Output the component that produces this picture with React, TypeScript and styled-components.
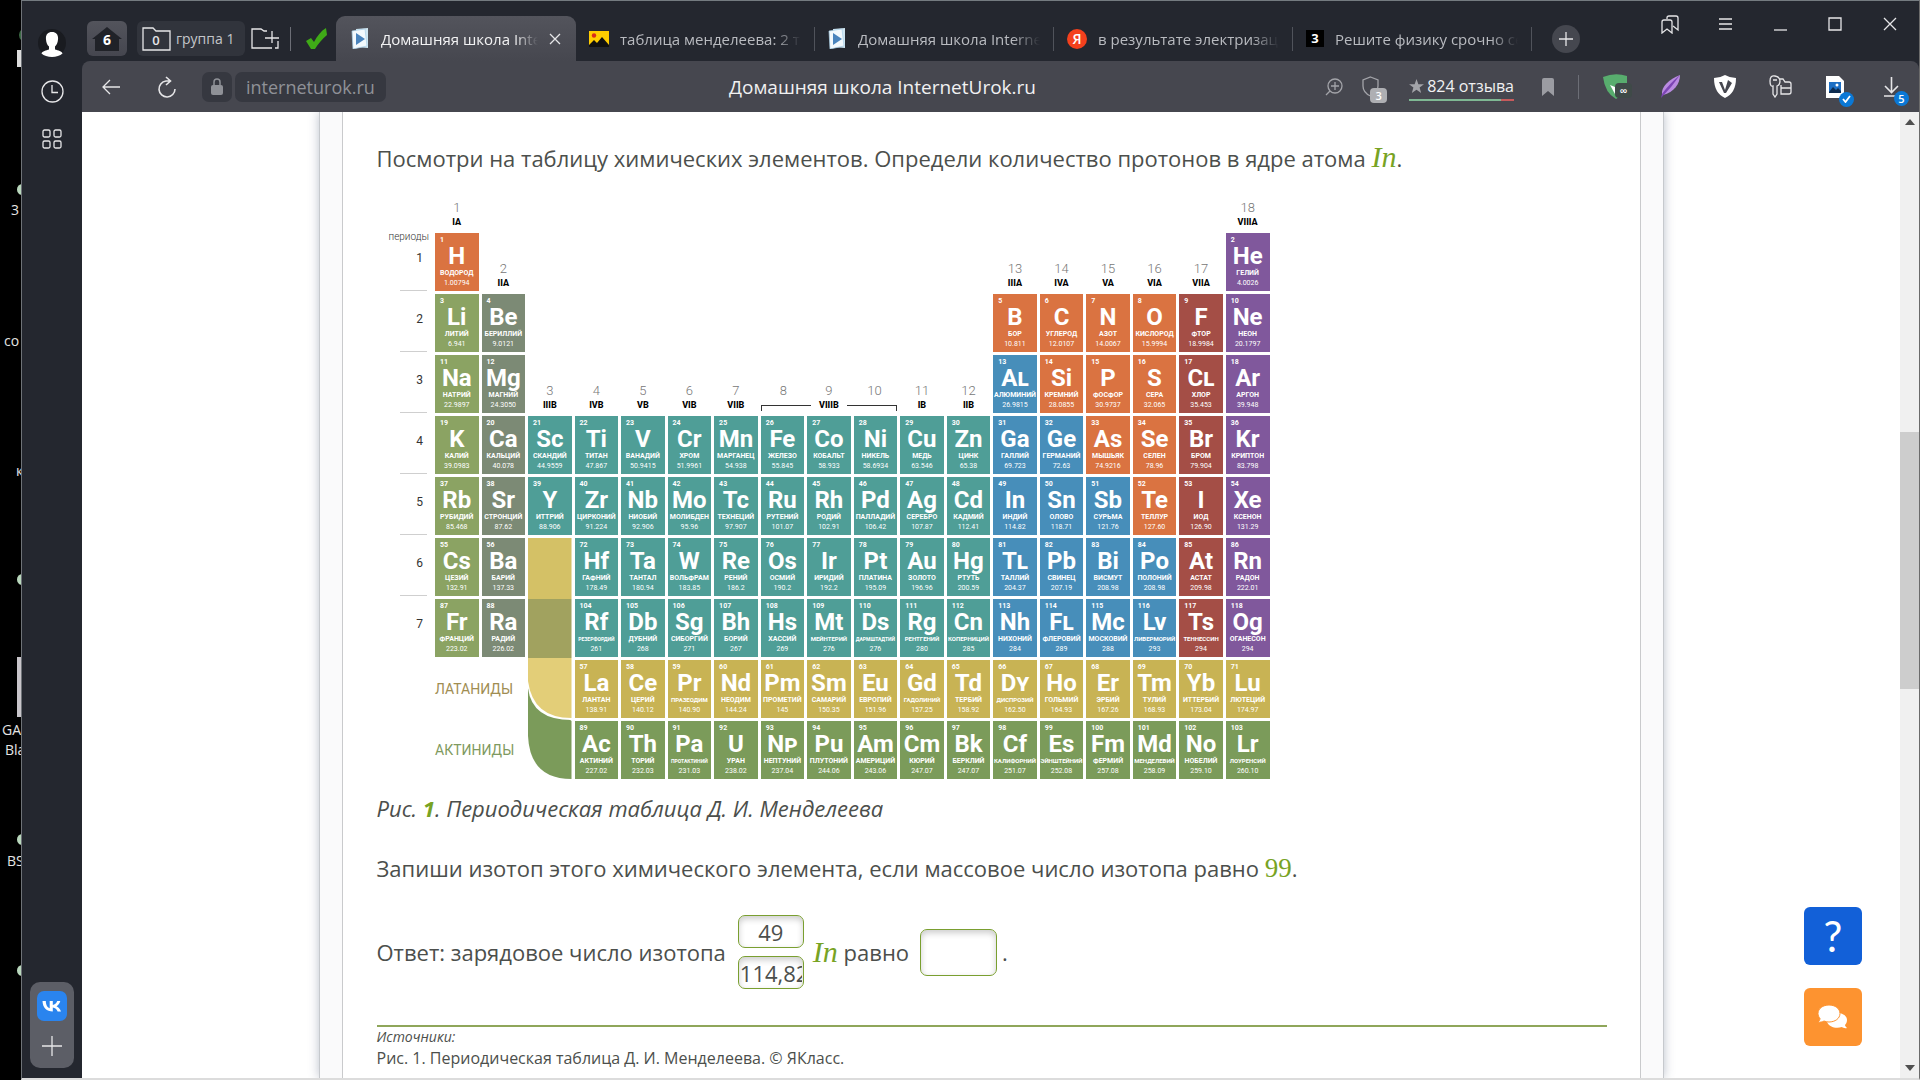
import React from "react";
import styled, { createGlobalStyle, css } from "styled-components";

const GlobalStyle = createGlobalStyle`
  * { box-sizing: border-box; }
  body { margin: 0; background: #000; font-family: "Open Sans", "Noto Sans", sans-serif; }
  button, input { font: inherit; color: inherit; }
  button { background: none; border: 0; padding: 0; margin: 0; }
  svg { flex: none; }
  p { margin: 0; }
  a { color: inherit; text-decoration: none; }
`;

/* ---------- window frame ---------- */

const Screen = styled.div`
  display: flex;
  height: 100vh;
  overflow: hidden;
`;

const Desktop = styled.div`
  position: relative;
  flex: 0 0 21px;
  background: #000;
  overflow: hidden;
`;

const DesktopLabel = styled.span<{ $x: number; $y: number }>`
  position: absolute;
  left: ${(p) => p.$x}px;
  top: ${(p) => p.$y}px;
  font-size: 14px;
  line-height: 20px;
  color: #e4e4e4;
  white-space: nowrap;
`;

const DesktopShape = styled.span<{ $y: number; $h: number; $w: number; $color: string; $round?: boolean }>`
  position: absolute;
  left: ${(p) => 21 - p.$w}px;
  top: ${(p) => p.$y}px;
  width: ${(p) => (p.$round ? p.$h : p.$w)}px;
  height: ${(p) => p.$h}px;
  background: ${(p) => p.$color};
  border-radius: ${(p) => (p.$round ? "50%" : "0")};
`;

const Window = styled.div`
  flex: 1;
  min-width: 0;
  display: flex;
  background: #24272f;
  border-top: 1px solid #747b80;
  border-left: 1px solid #6f7378;
  border-right: 1px solid #6b6b6b;
  border-bottom: 2px solid #dcdcdc;
`;

const SideBar = styled.nav`
  flex: 0 0 60px;
  display: flex;
  flex-direction: column;
  align-items: center;
  justify-content: space-between;
  padding: 28px 0 10px;
`;

const SideGroup = styled.div`
  display: flex;
  flex-direction: column;
  align-items: center;
  gap: 20px;
`;

const SideButton = styled.button`
  display: flex;
  align-items: center;
  justify-content: center;
  width: 30px;
  height: 28px;
`;

const MessengerBox = styled.div`
  display: flex;
  flex-direction: column;
  align-items: center;
  justify-content: space-between;
  width: 44px;
  height: 86px;
  padding: 10px 0 8px;
  border-radius: 10px;
  background: #5c5e66;
`;

const Column = styled.div`
  flex: 1;
  min-width: 0;
  display: flex;
  flex-direction: column;
`;

/* ---------- tab strip ---------- */

const TabStrip = styled.div`
  flex: 0 0 60px;
  display: flex;
  align-items: flex-start;
  justify-content: space-between;
  padding: 0 17px 0 5px;
`;

const TabsLeft = styled.div`
  display: flex;
  align-items: center;
  height: 60px;
  padding-top: 15px;
`;

const HomeButton = styled.button`
  display: flex;
  align-items: center;
  justify-content: center;
  width: 40px;
  height: 35px;
  border-radius: 6px;
  background: linear-gradient(#53545c, #45464f);
`;

const GroupButton = styled.button`
  display: flex;
  align-items: center;
  gap: 5px;
  width: 108px;
  height: 35px;
  margin: 0 6px 0 10px;
  padding-left: 5px;
  border-radius: 6px;
  background: #31343c;
  color: #c4c6ca;
  font-size: 14px;
  white-space: nowrap;
`;

const PlainButton = styled.button<{ $w: number }>`
  display: flex;
  align-items: center;
  justify-content: center;
  width: ${(p) => p.$w}px;
  height: 35px;
`;

const Divider = styled.span<{ $light?: boolean }>`
  flex: none;
  width: 1px;
  height: 24px;
  background: ${(p) => (p.$light ? "#6c6e76" : "#50535b")};
`;

const Check = styled.span`
  display: flex;
  margin: 0 9px 0 15px;
`;

const GroupDivider = styled(Divider)`
  margin-left: 11px;
`;

const Tab = styled.button<{ $active?: boolean }>`
  display: flex;
  align-items: center;
  gap: 11px;
  width: 238px;
  height: 45px;
  padding: 0 13px;
  border-radius: 9px 9px 0 0;
  color: #b9bbc0;
  font-size: 15px;
  line-height: 22px;
  ${(p) =>
    p.$active &&
    css`
      width: 240px;
      padding: 0 15px;
      background: linear-gradient(#53545c, #46474f);
      color: #f2f2f3;
    `}
`;

const TabTitle = styled.span`
  flex: 1;
  min-width: 0;
  text-align: left;
  white-space: nowrap;
  overflow: hidden;
  mask-image: linear-gradient(90deg, #000 85%, transparent 100%);
`;

const NewTab = styled.button`
  display: flex;
  align-items: center;
  justify-content: center;
  width: 28px;
  height: 28px;
  margin-left: 20px;
  border-radius: 50%;
  background: #45474f;
`;

const WindowControls = styled.div`
  display: flex;
  align-items: center;
  gap: 31px;
  padding-top: 11px;
`;

const ControlButton = styled.button`
  display: flex;
  align-items: center;
  justify-content: center;
  width: 24px;
  height: 24px;
`;

/* ---------- toolbar ---------- */

const Toolbar = styled.header`
  flex: 0 0 51px;
  display: flex;
  align-items: center;
  padding: 0 20px 0 18px;
  border-radius: 8px 8px 0 0;
  background: #46474f;
`;

const ToolGroup = styled.div`
  display: flex;
  align-items: center;
`;

const Reload = styled(PlainButton)`
  margin-left: 34px;
`;

const LockBox = styled.button`
  display: flex;
  align-items: center;
  justify-content: center;
  width: 30px;
  height: 30px;
  margin: 0 3px 0 24px;
  border-radius: 7px;
  background: #363840;
`;

const Address = styled.a`
  height: 30px;
  padding: 0 11px;
  border-radius: 7px;
  background: #363840;
  color: #8f9197;
  font-size: 18px;
  line-height: 30px;
`;

const PageTitle = styled.h1`
  flex: 1;
  margin: 0;
  padding-left: 54px;
  color: #f1f1f2;
  font-size: 19px;
  font-weight: 400;
  line-height: 30px;
  text-align: center;
  white-space: nowrap;
`;

const Reviews = styled.button`
  display: flex;
  align-items: center;
  gap: 3px;
  height: 28px;
  margin: 0 28px 0 30px;
  border-bottom: 2px solid;
  border-image: linear-gradient(90deg, #7fb894 87%, #c65a5c 87%) 1;
  color: #f1f1f2;
  font-size: 16px;
  white-space: nowrap;
`;

/* ---------- page ---------- */

const Viewport = styled.div`
  flex: 1;
  min-height: 0;
  display: flex;
  position: relative;
  background: #fff;
`;

const Page = styled.main`
  flex: 1;
  min-width: 0;
  display: flex;
  justify-content: center;
  overflow: hidden;
`;

const Sheet = styled.div`
  flex: 0 1 1345px;
  padding: 0 22px;
  background: #fafafb;
  border: solid #c6c9cd;
  border-width: 0 1px;
  box-shadow: 0 0 10px rgba(60, 75, 105, 0.35);
`;

const Article = styled.article`
  min-height: 100%;
  padding: 29px 33px 0 34px;
  background: #fff;
  border: solid #c9cacc;
  border-width: 0 1px;
  color: #4c4f4c;
  font-size: 22px;
  line-height: 34px;
`;

const Formula = styled.em<{ $upright?: boolean }>`
  font-family: "Liberation Serif", serif;
  font-size: ${(p) => (p.$upright ? 27 : 30)}px;
  line-height: 30px;
  font-style: ${(p) => (p.$upright ? "normal" : "italic")};
  color: #78a324;
`;

const Caption = styled.p`
  margin-top: 9px;
  font-style: italic;
  b { color: #78a324; }
`;

const Task = styled.p`
  margin-top: 26px;
`;

const Answer = styled.div`
  display: flex;
  align-items: center;
  margin-top: 30px;
`;

const Stack = styled.div`
  display: flex;
  flex-direction: column;
  gap: 8px;
  margin: 0 9px 0 12px;
`;

const Box = styled.input<{ $big?: boolean }>`
  display: block;
  width: ${(p) => (p.$big ? 77 : 66)}px;
  height: ${(p) => (p.$big ? 47 : 33)}px;
  margin: ${(p) => (p.$big ? "0 5px 0 11px" : "0")};
  padding: 0 1px;
  border: 1px solid #7a9f30;
  border-radius: 7px;
  background: #fff;
  box-shadow: inset 0 3px 6px rgba(0, 0, 0, 0.2);
  outline: none;
  text-align: center;
`;

const Sources = styled.footer`
  margin-top: 36px;
  border-top: 2px solid #8fa65a;
  font-size: 16px;
  line-height: 22px;
`;

const SourcesTitle = styled.p`
  font-size: 14px;
  font-style: italic;
  line-height: 20px;
`;

const ScrollBar = styled.div`
  flex: 0 0 19px;
  display: flex;
  flex-direction: column;
  align-items: center;
  padding: 7px 0;
  background: #f0f0f0;
`;

const Track = styled.div<{ $share: number }>`
  flex: ${(p) => p.$share} 0 0;
`;

const Thumb = styled.div`
  align-self: stretch;
  flex: 0 0 27%;
  background: #cdcdcd;
`;

const Floating = styled.div`
  position: absolute;
  right: 57px;
  bottom: 32px;
  display: flex;
  flex-direction: column;
  gap: 23px;
`;

const FloatButton = styled.button<{ $color: string }>`
  display: flex;
  align-items: center;
  justify-content: center;
  width: 58px;
  height: 58px;
  border-radius: 6px;
  background: ${(p) => p.$color};
  color: #fff;
  font-family: Lato, "Open Sans", sans-serif;
  font-size: 42px;
  line-height: 58px;
`;

/* ---------- periodic table ---------- */

const Chart = styled.table`
  width: 887px;
  margin: 18px 0 0 9px;
  table-layout: fixed;
  border-collapse: separate;
  border-spacing: 3px;
  font-family: Roboto, sans-serif;
  td, th { padding: 0; height: 58px; vertical-align: top; font-weight: 400; }
  tr:first-child > * { height: 34px; }
`;

const Head = styled.th`
  && { vertical-align: bottom; font-weight: 300; }
  color: #777;
  font-size: 13px;
  line-height: 15px;
  text-align: center;
`;

const Roman = styled.strong`
  display: block;
  color: #000;
  font-size: 9px;
  font-weight: 800;
  line-height: 15px;
`;

const Triple = styled.div`
  display: grid;
  grid-template-columns: repeat(3, 1fr);
`;

const Bracket = styled.div`
  display: grid;
  grid-template-columns: 50px 1fr 50px;
  align-items: start;
`;

const Arm = styled.span<{ $right?: boolean }>`
  height: 6px;
  margin-top: 7px;
  border: solid #333;
  border-width: ${(p) => (p.$right ? "1px 1px 0 0" : "1px 0 0 1px")};
`;

const Period = styled.th<{ $last?: boolean }>`
  color: #333;
  font-size: 12px;
  line-height: 50px;
  text-align: right;
  > span {
    display: block;
    height: 58px;
    margin: 0 5px 0 11px;
    padding-right: 4px;
    border-bottom: ${(p) => (p.$last ? "0" : "1px solid #cfcfcf")};
  }
`;

const PeriodCaption = styled.small`
  display: block;
  height: 0;
  font-size: 10px;
  font-weight: 300;
  line-height: 8px;
  padding-right: 5px;
`;

const Cell = styled.td<{ $bg: string }>`
  background: ${(p) => p.$bg};
  color: #fff;
  text-align: center;
`;

const Num = styled.span`
  display: block;
  height: 12px;
  padding: 2px 0 0 5px;
  font-size: 7px;
  font-weight: 700;
  line-height: 11px;
  text-align: left;
`;

const Sym = styled.b<{ $caps?: boolean }>`
  display: block;
  font-size: 24px;
  line-height: 23px;
  font-variant-caps: ${(p) => (p.$caps ? "small-caps" : "normal")};
`;

const Name = styled.span<{ $len: number }>`
  display: block;
  height: 10px;
  font-size: ${(p) => (p.$len > 10 ? 5 : p.$len > 8 ? 6 : 7)}px;
  font-weight: 700;
  line-height: 10px;
  white-space: nowrap;
`;

const Mass = styled.span`
  display: block;
  font-size: 7px;
  line-height: 11px;
`;

const Series = styled.th<{ $color: string }>`
  color: ${(p) => p.$color};
  font-size: 14px;
  line-height: 58px;
  text-align: left;
`;

const colors: Record<string, string> = {
  o: "#da7341", g: "#8ba363", k: "#7c8a75", t: "#4f9e97", b: "#478eba",
  p: "#80589c", r: "#a44e46", l: "#c8b354", a: "#7b9b5a",
};

type El = [number, string, string, string, string];

/* "number symbol name mass colour", entries divided by semicolons */
const parse = (s: string): El[] =>
  s.split(";").map((e) => {
    const [n, sym, name, mass, c] = e.trim().split(" ");
    return [Number(n), sym, name, mass, c];
  });

const periods = {
  1: [parse("1 H ВОДОРОД 1.00794 o"), parse("2 He ГЕЛИЙ 4.0026 p")],
  2: [
    parse("3 Li ЛИТИЙ 6.941 g;4 Be БЕРИЛЛИЙ 9.0121 k"),
    parse("5 B БОР 10.811 o;6 C УГЛЕРОД 12.0107 o;7 N АЗОТ 14.0067 o;8 O КИСЛОРОД 15.9994 o;9 F ФТОР 18.9984 r;10 Ne НЕОН 20.1797 p"),
  ],
  3: [
    parse("11 Na НАТРИЙ 22.9897 g;12 Mg МАГНИЙ 24.3050 k"),
    parse("13 Al АЛЮМИНИЙ 26.9815 b;14 Si КРЕМНИЙ 28.0855 o;15 P ФОСФОР 30.9737 o;16 S СЕРА 32.065 o;17 Cl ХЛОР 35.453 r;18 Ar АРГОН 39.948 p"),
  ],
  4: [
    parse("19 K КАЛИЙ 39.0983 g;20 Ca КАЛЬЦИЙ 40.078 k;21 Sc СКАНДИЙ 44.9559 t;22 Ti ТИТАН 47.867 t;23 V ВАНАДИЙ 50.9415 t;24 Cr ХРОМ 51.9961 t;25 Mn МАРГАНЕЦ 54.938 t;26 Fe ЖЕЛЕЗО 55.845 t;27 Co КОБАЛЬТ 58.933 t;28 Ni НИКЕЛЬ 58.6934 t;29 Cu МЕДЬ 63.546 t;30 Zn ЦИНК 65.38 t;31 Ga ГАЛЛИЙ 69.723 b;32 Ge ГЕРМАНИЙ 72.63 b;33 As МЫШЬЯК 74.9216 o;34 Se СЕЛЕН 78.96 o;35 Br БРОМ 79.904 r;36 Kr КРИПТОН 83.798 p"),
  ],
  5: [
    parse("37 Rb РУБИДИЙ 85.468 g;38 Sr СТРОНЦИЙ 87.62 k;39 Y ИТТРИЙ 88.906 t;40 Zr ЦИРКОНИЙ 91.224 t;41 Nb НИОБИЙ 92.906 t;42 Mo МОЛИБДЕН 95.96 t;43 Tc ТЕХНЕЦИЙ 97.907 t;44 Ru РУТЕНИЙ 101.07 t;45 Rh РОДИЙ 102.91 t;46 Pd ПАЛЛАДИЙ 106.42 t;47 Ag СЕРЕБРО 107.87 t;48 Cd КАДМИЙ 112.41 t;49 In ИНДИЙ 114.82 b;50 Sn ОЛОВО 118.71 b;51 Sb СУРЬМА 121.76 b;52 Te ТЕЛЛУР 127.60 o;53 I ИОД 126.90 r;54 Xe КСЕНОН 131.29 p"),
  ],
  6: [
    parse("55 Cs ЦЕЗИЙ 132.91 g;56 Ba БАРИЙ 137.33 k"),
    parse("72 Hf ГАФНИЙ 178.49 t;73 Ta ТАНТАЛ 180.94 t;74 W ВОЛЬФРАМ 183.85 t;75 Re РЕНИЙ 186.2 t;76 Os ОСМИЙ 190.2 t;77 Ir ИРИДИЙ 192.2 t;78 Pt ПЛАТИНА 195.09 t;79 Au ЗОЛОТО 196.96 t;80 Hg РТУТЬ 200.59 t;81 Tl ТАЛЛИЙ 204.37 b;82 Pb СВИНЕЦ 207.19 b;83 Bi ВИСМУТ 208.98 b;84 Po ПОЛОНИЙ 208.98 b;85 At АСТАТ 209.98 r;86 Rn РАДОН 222.01 p"),
  ],
  7: [
    parse("87 Fr ФРАНЦИЙ 223.02 g;88 Ra РАДИЙ 226.02 k"),
    parse("104 Rf РЕЗЕРФОРДИЙ 261 t;105 Db ДУБНИЙ 268 t;106 Sg СИБОРГИЙ 271 t;107 Bh БОРИЙ 267 t;108 Hs ХАССИЙ 269 t;109 Mt МЕЙНТЕРИЙ 276 t;110 Ds ДАРМШТАДТИЙ 276 t;111 Rg РЕНТГЕНИЙ 280 t;112 Cn КОПЕРНИЦИЙ 285 t;113 Nh НИХОНИЙ 284 b;114 Fl ФЛЕРОВИЙ 289 b;115 Mc МОСКОВИЙ 288 b;116 Lv ЛИВЕРМОРИЙ 293 b;117 Ts ТЕННЕССИН 294 r;118 Og ОГАНЕСОН 294 p"),
  ],
};

const lanthanides = parse("57 La ЛАНТАН 138.91 l;58 Ce ЦЕРИЙ 140.12 l;59 Pr ПРАЗЕОДИМ 140.90 l;60 Nd НЕОДИМ 144.24 l;61 Pm ПРОМЕТИЙ 145 l;62 Sm САМАРИЙ 150.35 l;63 Eu ЕВРОПИЙ 151.96 l;64 Gd ГАДОЛИНИЙ 157.25 l;65 Td ТЕРБИЙ 158.92 l;66 Dy ДИСПРОЗИЙ 162.50 l;67 Ho ГОЛЬМИЙ 164.93 l;68 Er ЭРБИЙ 167.26 l;69 Tm ТУЛИЙ 168.93 l;70 Yb ИТТЕРБИЙ 173.04 l;71 Lu ЛЮТЕЦИЙ 174.97 l");
const actinides = parse("89 Ac АКТИНИЙ 227.02 a;90 Th ТОРИЙ 232.03 a;91 Pa ПРОТАКТИНИЙ 231.03 a;92 U УРАН 238.02 a;93 Np НЕПТУНИЙ 237.04 a;94 Pu ПЛУТОНИЙ 244.06 a;95 Am АМЕРИЦИЙ 243.06 a;96 Cm КЮРИЙ 247.07 a;97 Bk БЕРКЛИЙ 247.07 a;98 Cf КАЛИФОРНИЙ 251.07 a;99 Es ЭЙНШТЕЙНИЙ 252.08 a;100 Fm ФЕРМИЙ 257.08 a;101 Md МЕНДЕЛЕВИЙ 258.09 a;102 No НОБЕЛИЙ 259.10 a;103 Lr ЛОУРЕНСИЙ 260.10 a");

const smallCaps = ["Al", "Cl", "Tl", "Fl", "Dy", "Np"];

const Elements = ({ list }: { list: El[] }) => (
  <>
    {list.map(([n, sym, name, mass, c]) => (
      <Cell key={n} $bg={colors[c]}>
        <Num>{n}</Num>
        <Sym $caps={smallCaps.includes(sym)}>{sym}</Sym>
        <Name $len={name.length}>{name}</Name>
        <Mass>{mass}</Mass>
      </Cell>
    ))}
  </>
);

const Group = ({ n, roman }: { n: number; roman: string }) => (
  <Head scope="col">
    {n}
    <Roman>{roman}</Roman>
  </Head>
);

const PeriodHead = ({ n }: { n: number }) => (
  <Period scope="row" $last={n === 7}>
    {n === 1 && <PeriodCaption>периоды</PeriodCaption>}
    <span>{n}</span>
  </Period>
);

const PeriodicTable = () => (
  <Chart>
    <tbody>
      <tr>
        <td />
        <Group n={1} roman="IA" />
        <td colSpan={16} />
        <Group n={18} roman="VIIIA" />
      </tr>
      <tr>
        <PeriodHead n={1} />
        <Elements list={periods[1][0]} />
        <Group n={2} roman="IIA" />
        <td colSpan={10} />
        <Group n={13} roman="IIIA" />
        <Group n={14} roman="IVA" />
        <Group n={15} roman="VA" />
        <Group n={16} roman="VIA" />
        <Group n={17} roman="VIIA" />
        <Elements list={periods[1][1]} />
      </tr>
      <tr>
        <PeriodHead n={2} />
        <Elements list={periods[2][0]} />
        <td colSpan={10} />
        <Elements list={periods[2][1]} />
      </tr>
      <tr>
        <PeriodHead n={3} />
        <Elements list={periods[3][0]} />
        <Group n={3} roman="IIIB" />
        <Group n={4} roman="IVB" />
        <Group n={5} roman="VB" />
        <Group n={6} roman="VIB" />
        <Group n={7} roman="VIIB" />
        <Head colSpan={3} scope="colgroup">
          <Triple>
            <span>8</span>
            <span>9</span>
            <span>10</span>
          </Triple>
          <Bracket>
            <Arm />
            <Roman>VIIIB</Roman>
            <Arm $right />
          </Bracket>
        </Head>
        <Group n={11} roman="IB" />
        <Group n={12} roman="IIB" />
        <Elements list={periods[3][1]} />
      </tr>
      <tr>
        <PeriodHead n={4} />
        <Elements list={periods[4][0]} />
      </tr>
      <tr>
        <PeriodHead n={5} />
        <Elements list={periods[5][0]} />
      </tr>
      <tr>
        <PeriodHead n={6} />
        <Elements list={periods[6][0]} />
        <td rowSpan={4}>
          <svg width="100%" height="241" viewBox="0 0 44 241" preserveAspectRatio="none" display="block">
            <path d="M0 150V198Q2 241 44 241V183Z" fill="#7b9b5a" />
            <path d="M0 120V150Q4 182 44 182V120Z" fill="#fff" />
            <path d="M0 120V143Q5 180 44 180V120Z" fill="#e3ce78" />
            <path d="M0 0H44V61H0Z" fill="#d4c166" />
            <path d="M0 61H44V120H0Z" fill="#a1a25f" />
          </svg>
        </td>
        <Elements list={periods[6][1]} />
      </tr>
      <tr>
        <PeriodHead n={7} />
        <Elements list={periods[7][0]} />
        <Elements list={periods[7][1]} />
      </tr>
      <tr>
        <td />
        <Series colSpan={2} scope="row" $color="#a08d52">ЛАТАНИДЫ</Series>
        <Elements list={lanthanides} />
      </tr>
      <tr>
        <td />
        <Series colSpan={2} scope="row" $color="#7f9a60">АКТИНИДЫ</Series>
        <Elements list={actinides} />
      </tr>
    </tbody>
  </Chart>
);

/* ---------- icons ---------- */

const line = { fill: "none", stroke: "#e6e6e8", strokeWidth: 1.3 } as const;

const LessonIcon = () => (
  <svg width="19" height="21" viewBox="0 0 19 21">
    <path d="M5 1 17 0V20L6 19Z" fill="#cfe6f2" />
    <path d="M1 3 14 1 16 18 2 21Z" fill="#f2f9fd" stroke="#a7cfe6" strokeWidth=".7" />
    <path d="M5 5V17L14 11Z" fill="#4a84bd" />
  </svg>
);

const PictureIcon = () => (
  <svg width="20" height="16" viewBox="0 0 20 16">
    <path d="M0 0H20V16H0Z" fill="#fc0" />
    <circle cx="5" cy="4.500" r="2.200" fill="#d82a1c" />
    <path d="M0 16V14L5 9 8 12 13 6 20 14V16Z" fill="#111" />
  </svg>
);

const YandexMark = styled.span`
  flex: none;
  width: 20px;
  height: 20px;
  border-radius: 50%;
  background: #f4401d;
  color: #fff;
  font-size: 14px;
  font-weight: 600;
  line-height: 19px;
  text-align: center;
`;

const BlackMark = styled.span`
  flex: none;
  width: 18px;
  height: 17px;
  background: #000;
  color: #fff;
  font-size: 13px;
  font-weight: 700;
  line-height: 17px;
  text-align: center;
`;

const VkIcon = () => (
  <svg width="30" height="30" viewBox="0 0 30 30">
    <rect width="30" height="30" rx="7" fill="#2a84ee" />
    <path d="M16 20.500C9.500 20.500 5.700 16.500 5.500 10H8.800C8.900 14.700 11 16.800 12.700 17.200V10H15.800V14C17.600 13.800 19.600 11.900 20.200 10H23.300C22.800 12.600 20.800 14.500 19.500 15.300 20.900 15.900 23 17.500 24 20.500H20.600C19.900 18.500 18.100 16.800 15.800 16.600V20.500Z" fill="#fff" />
  </svg>
);

const Extension = styled.span<{ $ml: number }>`
  position: relative;
  display: flex;
  margin-left: ${(p) => p.$ml}px;
`;

const Badge = styled.span<{ $bg: string; $round?: boolean; $w?: number; $bottom?: number; $right?: number }>`
  position: absolute;
  right: ${(p) => p.$right ?? -8}px;
  bottom: ${(p) => p.$bottom ?? -6}px;
  display: flex;
  align-items: center;
  justify-content: center;
  width: ${(p) => p.$w ?? 16}px;
  height: 15px;
  border-radius: ${(p) => (p.$round ? "50%" : "4px")};
  background: ${(p) => p.$bg};
  color: #fff;
  font-size: 11px;
  font-weight: 600;
  line-height: 15px;
`;

const tabs = [
  { icon: <PictureIcon />, title: "таблица менделеева: 2 тыс" },
  { icon: <LessonIcon />, title: "Домашняя школа InternetUrok" },
  { icon: <YandexMark>Я</YandexMark>, title: "в результате электризации" },
  { icon: <BlackMark>3</BlackMark>, title: "Решите физику срочно сегодня" },
];

/* ---------- application ---------- */

export default function App() {
  return (
    <Screen>
      <GlobalStyle />
      <Desktop>
        <DesktopShape $y={28} $h={14} $w={2} $color="#3c6b45" $round />
        <DesktopShape $y={50} $h={17} $w={4} $color="#ddd" />
        <DesktopShape $y={184} $h={11} $w={4} $color="#b9d8bd" $round />
        <DesktopShape $y={574} $h={11} $w={4} $color="#b9d8bd" $round />
        <DesktopShape $y={657} $h={60} $w={4} $color="#c9c6cb" />
        <DesktopShape $y={834} $h={11} $w={4} $color="#b9d8bd" $round />
        <DesktopShape $y={965} $h={11} $w={4} $color="#b9d8bd" $round />
        <DesktopLabel $x={11} $y={200}>3</DesktopLabel>
        <DesktopLabel $x={4} $y={331}>co</DesktopLabel>
        <DesktopLabel $x={16} $y={461}>к</DesktopLabel>
        <DesktopLabel $x={2} $y={720}>GA</DesktopLabel>
        <DesktopLabel $x={5} $y={740}>Bla</DesktopLabel>
        <DesktopLabel $x={7} $y={851}>BS</DesktopLabel>
      </Desktop>

      <Window>
        <SideBar>
          <SideGroup>
            <SideButton aria-label="Профиль">
              <svg width="28" height="28" viewBox="0 0 28 28">
                <circle cx="14" cy="14" r="14" fill="#191b20" />
                <path d="M14 3C18.500 3 20.500 6 20 10.500 19.800 14 18.500 16 17 17.500V20.500C20 21.500 24 22 24.500 24.500 20 29 8 29 3.500 24.500 4 22 8.500 21.500 11 20.500V17.500C9 16 8.300 13.500 8 10.500 7.500 6 9.500 3 14 3Z" fill="#fff" />
              </svg>
            </SideButton>
            <SideButton aria-label="История">
              <svg width="23" height="23" viewBox="0 0 23 23" {...line}>
                <circle cx="11.500" cy="11.500" r="10.500" />
                <path d="M11 5V12.500H17" />
              </svg>
            </SideButton>
            <SideButton aria-label="Приложения">
              <svg width="20" height="20" viewBox="0 0 20 20" {...line}>
                <rect x="1" y="1" width="7" height="7" rx="1.500" />
                <rect x="12" y="1" width="7" height="7" rx="1.500" />
                <rect x="1" y="12" width="7" height="7" rx="1.500" />
                <rect x="12" y="12" width="7" height="7" rx="1.500" />
              </svg>
            </SideButton>
          </SideGroup>
          <MessengerBox>
            <SideButton aria-label="ВКонтакте"><VkIcon /></SideButton>
            <SideButton aria-label="Добавить">
              <svg width="20" height="20" viewBox="0 0 20 20" {...line}><path d="M10 0V20M0 10H20" /></svg>
            </SideButton>
          </MessengerBox>
        </SideBar>

        <Column>
          <TabStrip>
            <TabsLeft>
              <HomeButton aria-label="Главная">
                <svg width="30" height="24" viewBox="0 0 30 24">
                  <path d="M15 0 30 12H27V24H3V12H0Z" fill="#202228" />
                  <text x="15" y="18" fill="#fff" fontSize="14" fontWeight="700" textAnchor="middle">6</text>
                </svg>
              </HomeButton>
              <GroupButton>
                <svg width="29" height="24" viewBox="0 0 29 24">
                  <path d="M1 1H11L14 4H28V23H1Z" {...line} />
                  <text x="14" y="18" fill="#e6e6e8" fontSize="13" fontWeight="600" textAnchor="middle">0</text>
                </svg>
                группа 1
              </GroupButton>
              <PlainButton $w={28} aria-label="Новая группа">
                <svg width="28" height="22" viewBox="0 0 28 22" {...line}>
                  <path d="M16 3H13L10 1H1V20H21M27 13V20H24M21 3V15M14 10H28" />
                </svg>
              </PlainButton>
              <GroupDivider $light />
              <Check>
                <svg width="21" height="21" viewBox="0 0 21 21">
                  <path d="M0 13 5 10 8 14C11 8 15 3 20 0L21 7C16 11 12 16 9 21H5Z" fill="#3faa17" />
                </svg>
              </Check>
              <Tab $active>
                <LessonIcon />
                <TabTitle>Домашняя школа InternetUrok</TabTitle>
                <svg width="12" height="12" viewBox="0 0 12 12" {...line}><path d="M1 1 11 11M11 1 1 11" /></svg>
              </Tab>
              {tabs.map((t, i) => (
                <React.Fragment key={i}>
                  <Tab>
                    {t.icon}
                    <TabTitle>{t.title}</TabTitle>
                  </Tab>
                  <Divider />
                </React.Fragment>
              ))}
              <NewTab aria-label="Новая вкладка">
                <svg width="14" height="14" viewBox="0 0 14 14" {...line}><path d="M7 0V14M0 7H14" /></svg>
              </NewTab>
            </TabsLeft>
            <WindowControls>
              <ControlButton aria-label="Закладки">
                <svg width="18" height="19" viewBox="0 0 18 19" {...line}>
                  <path d="M1 18V7Q1 5 3 5H9Q11 5 11 7V18L6 14Z" />
                  <path d="M6 4V3Q6 1 8 1H15Q17 1 17 3V15L12 11" />
                </svg>
              </ControlButton>
              <ControlButton aria-label="Меню">
                <svg width="13" height="12" viewBox="0 0 13 12" {...line}><path d="M0 1H13M0 6H13M0 11H13" /></svg>
              </ControlButton>
              <ControlButton aria-label="Свернуть">
                <svg width="13" height="14" viewBox="0 0 13 14" {...line}><path d="M0 13H13" /></svg>
              </ControlButton>
              <ControlButton aria-label="Развернуть">
                <svg width="14" height="14" viewBox="0 0 14 14" {...line}><path d="M1 1H13V13H1Z" /></svg>
              </ControlButton>
              <ControlButton aria-label="Закрыть">
                <svg width="14" height="14" viewBox="0 0 14 14" {...line}><path d="M1 1 13 13M13 1 1 13" /></svg>
              </ControlButton>
            </WindowControls>
          </TabStrip>

          <Toolbar>
            <ToolGroup>
              <PlainButton $w={22} aria-label="Назад">
                <svg width="18" height="16" viewBox="0 0 18 16" {...line}><path d="M8 1 1 8 8 15M1 8H18" /></svg>
              </PlainButton>
              <Reload $w={22} aria-label="Обновить">
                <svg width="20" height="22" viewBox="0 0 20 22" {...line} strokeWidth="1.600">
                  <path d="M13 5H9A8 8 0 1 0 18 13M9 1 13.500 5 9 9" />
                </svg>
              </Reload>
              <LockBox aria-label="Защищённое соединение">
                <svg width="12" height="17" viewBox="0 0 12 17">
                  <path d="M3 7V4Q3 1 6 1T9 4V7" fill="none" stroke="#8f9197" strokeWidth="1.500" />
                  <rect y="7" width="12" height="10" rx="2" fill="#8f9197" />
                </svg>
              </LockBox>
              <Address href="#">interneturok.ru</Address>
            </ToolGroup>
            <PageTitle>Домашняя школа InternetUrok.ru</PageTitle>
            <ToolGroup>
              <svg width="18" height="18" viewBox="0 0 18 18" {...line} stroke="#a3a4a9">
                <circle cx="10" cy="8" r="7" />
                <path d="M5 13 1 17M10 4V12M6 8H14" />
              </svg>
              <Extension $ml={19}>
                <svg width="17" height="21" viewBox="0 0 17 21" {...line} stroke="#a3a4a9">
                  <path d="M8.500 1 16 4V10C16 14 13 18 8.500 20 4 18 1 14 1 10V4Z" />
                </svg>
                <Badge $bg="#aeafb3" $w={17}>3</Badge>
              </Extension>
              <Reviews>
                <svg width="15" height="14" viewBox="0 0 16 15">
                  <path d="M8 0 10 5.500H16L11.300 9 13 15 8 11.500 3 15 4.700 9 0 5.500H6Z" fill="#a3a4a9" />
                </svg>
                824 отзыва
              </Reviews>
              <svg width="12" height="18" viewBox="0 0 12 18">
                <path d="M0 2Q0 0 2 0H10Q12 0 12 2V18L6 13 0 18Z" fill="#9b9ca2" />
              </svg>
              <Extension $ml={24}><Divider $light /></Extension>
              <Extension $ml={24}>
                <svg width="24" height="25" viewBox="0 0 24 25">
                  <path d="M0 3Q12-2 24 2V12Q20 21 13 25 2 19 0 3Z" fill="#58ad6e" />
                  <path d="M7 11 12 20V13Z" fill="#fff" />
                </svg>
                <Badge $bg="#3f4a48" $w={17} $right={-5} $bottom={1}>∞</Badge>
              </Extension>
              <Extension $ml={33}>
                <svg width="20" height="24" viewBox="0 0 20 24">
                  <path d="M2 19C1 12 9 4 20 0 20 9 14 17 3 20Z" fill="#b98be0" />
                  <path d="M2 19Q9 9 20 0 12 12 1 23Z" fill="#7c45b4" />
                </svg>
              </Extension>
              <Extension $ml={34}>
                <svg width="22" height="23" viewBox="0 0 22 23">
                  <path d="M0 3Q6 3 11 0 16 3 22 3 22 18 11 23 0 18 0 3Z" fill="#fff" />
                  <path d="M5 7H8L11 15 14 5 18 8 12 18H10Z" fill="#46474f" />
                </svg>
              </Extension>
              <Extension $ml={33}>
                <svg width="23" height="23" viewBox="0 0 23 23" {...line}>
                  <path d="M4 11V19L6 22 8 19V11Q11 10 11 6T6 1 1 6 4 11ZM4 5H8" />
                  <path d="M11 4H14L16 7H20Q22 7 22 9V17Q22 19 20 19H12V10M12 13H22" />
                </svg>
              </Extension>
              <Extension $ml={34}>
                <svg width="18" height="22" viewBox="0 0 18 22">
                  <path d="M0 0H13L18 5V22H0Z" fill="#fff" />
                  <path d="M3 6H15V17H3Z" fill="#1d6fc4" />
                  <path d="M3 16 7 11 10 14 12 12 15 15V17H3Z" fill="#0e2c50" />
                  <circle cx="11" cy="9" r="1.500" fill="#fff" />
                </svg>
                <Badge $bg="#0a78d6" $round $w={15} $right={-10} $bottom={-9}>
                  <svg width="9" height="8" viewBox="0 0 9 8"><path d="M1 4 3.500 7 8 1" fill="none" stroke="#fff" strokeWidth="1.800" /></svg>
                </Badge>
              </Extension>
              <Extension $ml={40}>
                <svg width="15" height="20" viewBox="0 0 15 20" {...line} strokeWidth="1.600">
                  <path d="M7.500 0V15M1 9 7.500 15.500 14 9M0 19H12" />
                </svg>
                <Badge $bg="#0a78d6" $round $w={15} $right={-10} $bottom={-9}>5</Badge>
              </Extension>
            </ToolGroup>
          </Toolbar>

          <Viewport>
            <Page>
              <Sheet>
                <Article>
                  <p>
                    Посмотри на таблицу химических элементов. Определи количество протонов в ядре атома <Formula>In</Formula>.
                  </p>
                  <PeriodicTable />
                  <Caption>
                    Рис. <b>1</b>. Периодическая таблица Д. И. Менделеева
                  </Caption>
                  <Task>
                    Запиши изотоп этого химического элемента, если массовое число изотопа равно <Formula $upright>99</Formula>.
                  </Task>
                  <Answer>
                    <label htmlFor="charge">Ответ: зарядовое число изотопа</label>
                    <Stack>
                      <Box id="charge" defaultValue="49" />
                      <Box aria-label="Массовое число" defaultValue="114,82" />
                    </Stack>
                    <Formula>In</Formula>
                    <label htmlFor="result">&nbsp;равно</label>
                    <Box id="result" $big />.
                  </Answer>
                  <Sources>
                    <SourcesTitle>Источники:</SourcesTitle>
                    <p>Рис. 1. Периодическая таблица Д. И. Менделеева. © ЯКласс.</p>
                  </Sources>
                </Article>
              </Sheet>
            </Page>
            <ScrollBar>
              <svg width="10" height="6" viewBox="0 0 10 6"><path d="M0 6 5 0 10 6Z" fill="#505050" /></svg>
              <Track $share={45} />
              <Thumb />
              <Track $share={55} />
              <svg width="10" height="6" viewBox="0 0 10 6"><path d="M0 0 5 6 10 0Z" fill="#505050" /></svg>
            </ScrollBar>
            <Floating>
              <FloatButton $color="#1260d8">?</FloatButton>
              <FloatButton $color="#fd9330" aria-label="Чат">
                <svg width="30" height="24" viewBox="0 0 30 24">
                  <path d="M19 8C25 8 29 11 29 15 29 17 28 19 27 20 27 21 28 22 29 23 27 23.500 25 23 24 22 18 24 11 22 9 17Z" fill="#fff" />
                  <path d="M11 0C17 0 22 3.500 22 8.500S17 17 11 17C9.500 17 7.500 16.700 6 16 4.500 17 2 17.500 0 17 1.500 16 2 14.500 2 13.500 .8 12 0 10.500 0 8.500 0 3.500 5 0 11 0Z" fill="#fff" stroke="#fd9330" />
                </svg>
              </FloatButton>
            </Floating>
          </Viewport>
        </Column>
      </Window>
    </Screen>
  );
}
